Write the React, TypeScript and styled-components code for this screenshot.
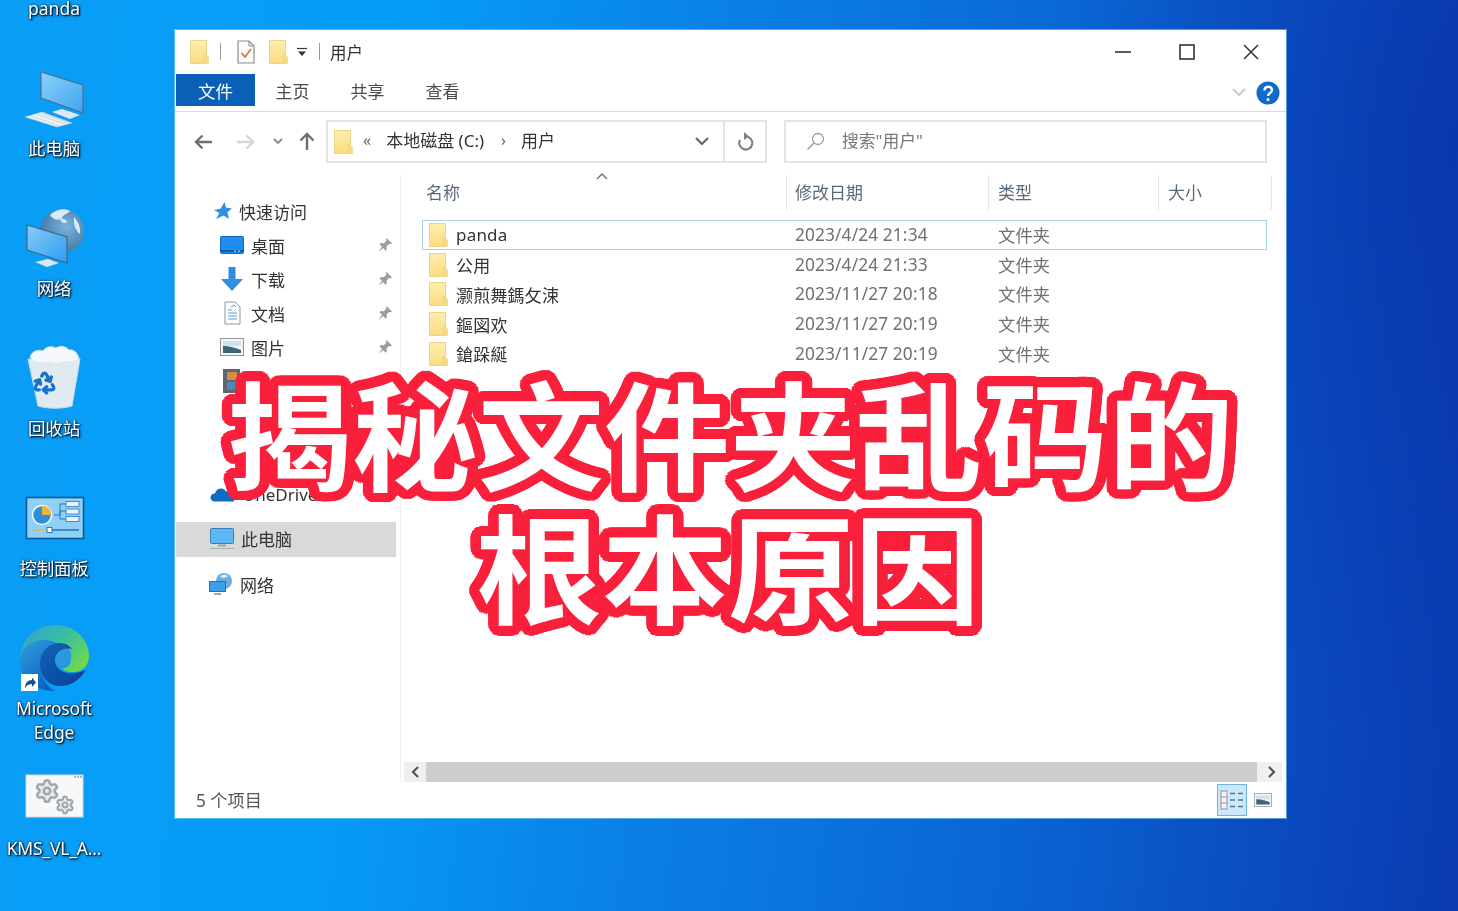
import React from 'react';
import styled, { createGlobalStyle } from 'styled-components';
import { Recycle, Settings } from 'lucide-react';

const FONT = '"Noto Sans", "Noto Sans CJK SC", sans-serif';

// round outline around the headline: rings of hard shadows
const outlineShadow = (color: string) => {
  const parts: string[] = [];
  [10.5, 7, 3.5].forEach(radius => {
    for (let i = 0; i < 36; i++) {
      const angle = (i / 36) * Math.PI * 2;
      parts.push(`${(Math.cos(angle) * radius).toFixed(1)}px ${(Math.sin(angle) * radius).toFixed(1)}px 0 ${color}`);
    }
  });
  return parts.join(', ');
};

const GlobalStyle = createGlobalStyle`
  html, body {
    margin: 0;
    padding: 0;
    overflow: hidden;
  }
  body {
    font-family: ${FONT};
  }
`;

const Desktop = styled.div`
  position: relative;
  display: flex;
  align-items: flex-start;
  width: 1458px;
  height: 911px;
  overflow: hidden;
  background:
    radial-gradient(420px 620px at 100% 15%, rgba(8, 40, 160, 0.45), rgba(8, 40, 160, 0)),
    linear-gradient(97deg, #0a9ef6 0%, #069df6 26%, #0a82e6 45%, #0a66d4 70%, #0a48bc 90%, #0a3ab0 100%);
`;

const IconColumn = styled.div`
  display: flex;
  flex-direction: column;
  flex: none;
  width: 108px;
  margin-right: 67px;
  filter: blur(0.4px);
`;

const TopLabel = styled.div`
  height: 21px;
  margin-top: -4px;
  padding-bottom: 4px;
  text-align: center;
  color: #fff;
  font-size: 17.5px;
  line-height: 24px;
  text-shadow: 1px 1px 1px #02243f, 1px 1px 3px #02243f, 0 0 2px #02243f;
`;

const DesktopItem = styled.div`
  display: flex;
  flex-direction: column;
  align-items: center;
  height: 140px;
`;

const DesktopIconBox = styled.div`
  display: flex;
  align-items: flex-end;
  flex: none;
  height: 112px;
  margin-bottom: 3px;
`;

const DesktopLabel = styled.div`
  flex: none;
  text-align: center;
  white-space: pre-line;
  color: #fff;
  font-size: 17.5px;
  line-height: 24px;
  letter-spacing: -0.2px;
  text-shadow: 1px 1px 1px #02243f, 1px 1px 3px #02243f, 0 0 2px #02243f;
`;

const Window = styled.div`
  display: flex;
  flex-direction: column;
  flex: none;
  width: 1111px;
  height: 788px;
  margin-top: 30px;
  background: #fff;
  box-shadow: 0 0 0 1px rgba(140, 215, 255, 0.55);
  color: #333;
  filter: blur(0.4px);
`;

const TitleBar = styled.div`
  display: flex;
  align-items: center;
  flex: none;
  height: 43px;
  padding-left: 15px;
  padding-bottom: 1px;
`;

const QuickSep = styled.span<{ $left: number; $right: number }>`
  width: 1px;
  height: 17px;
  margin: 0 ${p => p.$right}px 0 ${p => p.$left}px;
  background: #9a9a9a;
`;

const QuickSlot = styled.span<{ $right?: number }>`
  display: flex;
  margin-right: ${p => p.$right ?? 0}px;
`;

const WindowTitle = styled.span`
  font-size: 16.5px;
  color: #333;
`;

const WindowControls = styled.div`
  display: flex;
  margin-left: auto;
  margin-right: 3px;
`;

const ControlButton = styled.div`
  display: flex;
  align-items: center;
  justify-content: center;
  width: 64px;
  height: 43px;
`;

const Ribbon = styled.div`
  display: flex;
  align-items: flex-start;
  flex: none;
  height: 37px;
  border-bottom: 1px solid #dadbdc;
`;

const FileTab = styled.div`
  display: flex;
  align-items: center;
  justify-content: center;
  width: 79px;
  height: 32px;
  margin-left: 1px;
  background: #0a60b6;
  color: #fff;
  font-size: 17.5px;
`;

const RibbonTab = styled.div`
  display: flex;
  align-items: center;
  height: 33px;
  padding: 0 20.5px;
  font-size: 17px;
  color: #4a4a4a;
`;

const RibbonEnd = styled.div`
  display: flex;
  align-items: center;
  gap: 10px;
  height: 37px;
  margin-left: auto;
  margin-right: 6px;
`;

const NavBar = styled.div`
  display: flex;
  align-items: flex-start;
  flex: none;
  height: 63px;
  box-sizing: border-box;
  padding: 8px 19px 0 18px;
`;

const NavButtons = styled.div`
  display: flex;
  align-items: center;
  flex: none;
  width: 133px;
  height: 43px;
`;

const NavGlyph = styled.span<{ $left?: number }>`
  display: flex;
  flex: none;
  justify-content: center;
  width: 20px;
  margin-left: ${p => p.$left ?? 0}px;
`;

const AddressBox = styled.div`
  display: flex;
  align-items: center;
  flex: none;
  width: 441px;
  height: 43px;
  box-sizing: border-box;
  border: 2px solid #e3e4e5;
  padding-left: 6px;
  font-size: 17px;
  color: #333;
`;

const Crumb = styled.span<{ $left: number }>`
  margin: 0 0 5px ${p => p.$left}px;
  white-space: nowrap;
`;

const CrumbMark = styled.span<{ $left: number }>`
  margin: 0 0 3px ${p => p.$left}px;
  color: #666;
  font-size: 16px;
`;

const AddressEnd = styled.div`
  display: flex;
  align-items: center;
  height: 100%;
  margin-left: auto;
`;

const RefreshCell = styled.div`
  display: flex;
  align-items: center;
  justify-content: center;
  width: 42px;
  height: 100%;
  box-sizing: border-box;
  margin-left: 14px;
  border-left: 2px solid #e3e4e5;
`;

const SearchBox = styled.div`
  display: flex;
  align-items: center;
  flex: none;
  gap: 17px;
  width: 483px;
  height: 43px;
  margin-left: 17px;
  padding-left: 20px;
  box-sizing: border-box;
  border: 2px solid #e3e4e5;
  color: #777;
  font-size: 16.8px;
`;

const SearchHint = styled.span`
  margin-bottom: 4px;
`;

const Content = styled.div`
  display: flex;
  flex: 1;
  min-height: 0;
`;

const NavPane = styled.div`
  display: flex;
  flex-direction: column;
  flex: none;
  width: 226px;
  box-sizing: border-box;
  padding-top: 20px;
  border-right: 1px solid #f1f1f1;
`;

const NavRow = styled.div<{ $indent: number; $top?: number; $active?: boolean; $height?: number }>`
  position: relative;
  display: flex;
  align-items: center;
  flex: none;
  gap: 7px;
  width: 220px;
  height: ${p => p.$height ?? 34}px;
  margin: ${p => p.$top ?? 0}px 0 0 1px;
  padding: 0 0 2px ${p => p.$indent}px;
  box-sizing: border-box;
  background: ${p => (p.$active ? '#d9d9d9' : 'transparent')};
  font-size: 17px;
  color: #333;
`;

const NavPin = styled.span`
  display: flex;
  margin-left: auto;
  margin-right: 3px;
`;

const FilePane = styled.div`
  display: flex;
  flex-direction: column;
  flex: 1;
  min-width: 0;
`;

const HeaderRow = styled.div`
  display: grid;
  grid-template-columns: 386px 202px 170px 113px;
  flex: none;
  height: 35px;
`;

const HeaderCell = styled.div<{ $pad: number }>`
  position: relative;
  display: flex;
  align-items: center;
  padding: 0 0 3px ${p => p.$pad}px;
  border-right: 1px solid #e5e6e7;
  font-size: 17px;
  color: #5b6a7a;
`;

const SortCaret = styled.svg`
  position: absolute;
  top: -2px;
  left: 195px;
`;

const FileList = styled.div`
  display: flex;
  flex-direction: column;
  margin: 10px 0 0 21px;
  width: 845px;
`;

const FileRow = styled.div<{ $selected?: boolean }>`
  display: grid;
  grid-template-columns: 372px 203px 170px 98px;
  align-items: center;
  height: 29.75px;
  box-sizing: border-box;
  border: 1px solid ${p => (p.$selected ? '#a5d3ee' : 'transparent')};
`;

const FileName = styled.div`
  display: flex;
  align-items: center;
  gap: 8px;
  padding-left: 6px;
  font-size: 17px;
  letter-spacing: 0.2px;
  color: #333;
`;

const FileMeta = styled.div`
  margin-bottom: 1px;
  font-size: 17.3px;
  letter-spacing: 0.13px;
  color: #707070;
  white-space: nowrap;
`;

const ScrollBar = styled.div`
  display: flex;
  align-items: stretch;
  flex: none;
  width: 878px;
  height: 20px;
  margin: auto 0 0 3px;
  background: #f0f0f0;
`;

const ScrollArrow = styled.div<{ $width: number; $nudge?: number }>`
  display: flex;
  align-items: center;
  justify-content: center;
  width: ${p => p.$width}px;
  box-sizing: border-box;
  padding-left: ${p => p.$nudge ?? 0}px;
`;

const ScrollThumb = styled.div`
  flex: 1;
  background: #cdcdcd;
`;

const StatusBar = styled.div`
  display: flex;
  align-items: center;
  flex: none;
  height: 36px;
  padding: 0 13px 0 21px;
  font-size: 17.2px;
  color: #555;
`;

const StatusText = styled.span`
  margin-bottom: 2px;
`;

const ViewButtons = styled.div`
  display: flex;
  align-items: center;
  gap: 6px;
  margin-left: auto;
`;

const ViewButton = styled.div<{ $active?: boolean }>`
  display: flex;
  align-items: center;
  justify-content: center;
  width: ${p => (p.$active ? 30 : 20)}px;
  height: 32px;
  box-sizing: border-box;
  background: ${p => (p.$active ? '#cce8ff' : 'transparent')};
  border: 1px solid ${p => (p.$active ? '#6fb4e0' : 'transparent')};
`;

const HeadlineText = styled.div`
  position: absolute;
  top: 364px;
  left: 0;
  width: 1458px;
  padding-left: 2px;
  box-sizing: border-box;
  text-align: center;
  font-family: "Noto Sans CJK SC", "Noto Sans", sans-serif;
  font-size: 126px;
  font-weight: 700;
  line-height: 141.5px;
  color: #fff;
  text-shadow: ${outlineShadow('#f9203c')};
  transform: scaleY(0.94);
  transform-origin: top;
`;

const HeadlineLine = styled.div<{ $shift?: number }>`
  margin-left: ${p => p.$shift ?? 0}px;
  white-space: nowrap;
`;

const FolderIcon = () => (
  <svg width="19" height="24" viewBox="0 0 19 24">
    <defs>
      <linearGradient id="folderFill" x1="0" y1="0" x2="0" y2="1">
        <stop offset="0" stopColor="#ffeeb0" />
        <stop offset="1" stopColor="#fbdc80" />
      </linearGradient>
    </defs>
    <rect x="0.5" y="0.5" width="16" height="23" fill="url(#folderFill)" stroke="#ecd48a" />
    <path d="M14 23.5V14l4.5 3v6.5z" fill="#f9d97e" stroke="#ecd48a" strokeWidth="0.6" />
  </svg>
);

const ComputerArt = () => (
  <svg width="80" height="80" viewBox="0 0 80 80">
    <defs>
      <linearGradient id="screenFill" x1="0" y1="0" x2="1" y2="1">
        <stop offset="0" stopColor="#8fd0f8" />
        <stop offset="1" stopColor="#3da5f2" />
      </linearGradient>
    </defs>
    <polygon points="27,19 69,32 69,60 27,45" fill="url(#screenFill)" stroke="#4c6f8f" strokeWidth="1.2" />
    <polygon points="52,58 58,59 58,63 52,62" fill="#a8c0d4" />
    <polygon points="38,59 48,56 66,62 56,66" fill="#dfe8ef" />
    <polygon points="11,64 28,59 58,70 43,74" fill="#eef3f6" stroke="#b6c6d3" strokeWidth="0.6" />
    <path d="M17 63l29 10M22 61l29 10M27 60l27 10" stroke="#b9c9d6" strokeWidth="0.7" />
  </svg>
);

const NetworkArt = () => (
  <svg width="80" height="80" viewBox="0 0 80 80">
    <defs>
      <linearGradient id="netScreen" x1="0" y1="0" x2="1" y2="1">
        <stop offset="0" stopColor="#85cdf8" />
        <stop offset="1" stopColor="#2f9cf0" />
      </linearGradient>
      <radialGradient id="globeFill" cx="0.6" cy="0.4" r="0.7">
        <stop offset="0" stopColor="#7db4dc" />
        <stop offset="1" stopColor="#39709f" />
      </radialGradient>
    </defs>
    <circle cx="48" cy="38" r="22" fill="url(#globeFill)" />
    <path d="M36 22c6-6 15-7 20-4-2 3-7 3-8 7-3 3-9 2-12-3zM60 24c4 4 7 11 6 17-3-2-7-8-6-17zM46 26c3-1 6 0 7 3-2 2-6 1-7-3z" fill="#d5ebf8" />
    <polygon points="13,32 53,44 53,70 13,57" fill="url(#netScreen)" stroke="#3f6687" strokeWidth="1.2" />
    <polygon points="21,69 34,66 45,70 33,74" fill="#dbe5ec" />
  </svg>
);

const RecycleArt = () => (
  <svg width="80" height="80" viewBox="0 0 80 80">
    <path d="M14 26h52l-8 47c-10 3-24 3-34 0z" fill="#dfeaf1" stroke="#c4d9e6" />
    <path d="M16 24c3-8 10-7 13-6 3-5 9-5 13-3 4-3 10-2 13 2 5-1 9 3 10 9-8 4-14 2-18 4-6 2-12-2-17 0-5 1-11-1-14-6z" fill="#f6f9fb" stroke="#d6e2ea" strokeWidth="0.7" />
    <Recycle x={18} y={37} width={25} height={25} color="#1773c9" strokeWidth={3.2} />
  </svg>
);

const ControlPanelArt = () => (
  <svg width="80" height="80" viewBox="0 0 80 80">
    <rect x="12.5" y="24.5" width="57" height="41" fill="#8fd0f7" stroke="#0d5a96" strokeWidth="1.6" />
    <circle cx="28" cy="42" r="9.5" fill="#2f8fdc" stroke="#fff" strokeWidth="1.4" />
    <path d="M28 32.5a9.5 9.5 0 0 1 9.5 9.5H28z" fill="#f2b13c" />
    <path d="M40 42h6V31h6M46 38h6M46 38v8h6" fill="none" stroke="#2a78b8" strokeWidth="1" />
    <rect x="52" y="28.5" width="13" height="5" fill="#e8f4fb" stroke="#2a78b8" strokeWidth="0.8" />
    <rect x="52" y="36" width="13" height="5" fill="#e8f4fb" stroke="#2a78b8" strokeWidth="0.8" />
    <rect x="52" y="43.5" width="13" height="5" fill="#e8f4fb" stroke="#2a78b8" strokeWidth="0.8" />
    <path d="M19 57h17" stroke="#e3b84d" strokeWidth="1.6" />
    <path d="M36 57h29" stroke="#2a78b8" strokeWidth="1.6" />
    <rect x="33" y="54.5" width="5" height="5" fill="#fff" stroke="#2a78b8" />
  </svg>
);

const EdgeArt = () => (
  <svg width="80" height="80" viewBox="0 0 80 80">
    <defs>
      <linearGradient id="edgeTop" x1="0" y1="0" x2="1" y2="0.7">
        <stop offset="0" stopColor="#2f9fd8" />
        <stop offset="0.55" stopColor="#38bfa2" />
        <stop offset="1" stopColor="#6fd84e" />
      </linearGradient>
      <linearGradient id="edgeLeft" x1="0" y1="0" x2="0.6" y2="1">
        <stop offset="0" stopColor="#2f9fe0" />
        <stop offset="1" stopColor="#0c62c0" />
      </linearGradient>
      <linearGradient id="edgeHook" x1="0" y1="0" x2="1" y2="1">
        <stop offset="0" stopColor="#1163b6" />
        <stop offset="1" stopColor="#0a3f96" />
      </linearGradient>
    </defs>
    <path d="M6 47C6 26 22 12 41 12c21 0 34 15 34 31 0 10-7 16-16 16-7 0-10-2-11-4 6 0 9-4 9-9 0-9-11-16-23-16C20 30 9 36 6 47z" fill="url(#edgeTop)" />
    <path d="M6 47c0-12 12-20 24-20 6 0 11 2 14 4-10 0-18 9-18 20 0 12 6 22 15 27C20 78 6 66 6 47z" fill="url(#edgeLeft)" />
    <path d="M38 33c8-4 17-2 19 8 1 6-3 12-9 14-7-3-14-14-10-22z" fill="#2b97df" />
    <path d="M26 51c0-12 9-21 19-21 6 0 10 2 13 6-9-2-17 3-17 11 0 9 9 14 18 13 5 0 9-2 13-3-7 11-16 16-25 16C35 73 26 65 26 51z" fill="url(#edgeHook)" />
    <rect x="7" y="61" width="17" height="17" fill="#fff" />
    <path d="M11 75c0-5 3-8 7-8v-2.500l4 5-4 4.500v-3c-3 0-5 1-7 4z" fill="#1b4f8f" />
  </svg>
);

const KmsArt = () => (
  <svg width="80" height="80" viewBox="0 0 80 80">
    <rect x="12" y="22" width="57" height="42" fill="#f7f8f9" stroke="#d5d9dc" />
    <path d="M60 24h2M63 24h2M66 24h2" stroke="#9aa3a9" strokeWidth="1.4" />
    <Settings x={20} y={25} width={26} height={26} color="#a3a8ab" strokeWidth={2.4} fill="#e9eaeb" />
    <Settings x={41} y={42} width={20} height={20} color="#a3a8ab" strokeWidth={2.6} fill="#e9eaeb" />
  </svg>
);

const CheckPageIcon = () => (
  <svg width="18" height="24" viewBox="0 0 18 24">
    <path d="M1 1h11l5 5v17H1z" fill="#fbfbfb" stroke="#8b8b8b" strokeWidth="1.2" />
    <path d="M12 1v5h5" fill="none" stroke="#8b8b8b" />
    <path d="M4.500 13l3.500 4 6-8" fill="none" stroke="#de6a3c" strokeWidth="1.6" />
  </svg>
);

const DesktopSmallIcon = () => (
  <svg width="24" height="18" viewBox="0 0 24 18">
    <rect x="0.5" y="0.5" width="23" height="17" rx="1" fill="#1f8cf0" stroke="#1169bd" />
    <path d="M1 15h22" stroke="#0a5ca8" strokeWidth="2" />
    <path d="M14 15h2M18 15h2" stroke="#cfe8fb" />
  </svg>
);

const DownloadSmallIcon = () => (
  <svg width="24" height="24" viewBox="0 0 24 24">
    <path d="M8.500 0h7v12H23L12 24 1 12h7.500z" fill="#2f8ee2" />
  </svg>
);

const DocSmallIcon = () => (
  <svg width="24" height="24" viewBox="0 0 24 24">
    <path d="M5 1h10l5 5v17H5z" fill="#fbfcfd" stroke="#8e969c" />
    <path d="M8 9h4M8 12h9M8 15h9M8 18h9" stroke="#5f9fd8" />
    <path d="M11 6l3-2 2 2" stroke="#5f9fd8" fill="none" />
  </svg>
);

const PictureSmallIcon = () => (
  <svg width="24" height="18" viewBox="0 0 24 18">
    <rect x="0.500" y="0.500" width="23" height="17" fill="#f4f6f7" stroke="#8e969c" />
    <path d="M3 3h18v5H3z" fill="#cfe2ee" />
    <path d="M3 8c6 0 10 1 18 4v3H3z" fill="#3e6478" />
  </svg>
);

const VideoSmallIcon = () => (
  <svg width="24" height="24" viewBox="0 0 24 24">
    <rect x="3" y="0" width="17" height="24" fill="#5c6770" />
    <rect x="7" y="3" width="10" height="8" fill="#d98a45" />
    <rect x="7" y="13" width="10" height="8" fill="#4f86b8" />
  </svg>
);

const StarIcon = () => (
  <svg width="18" height="18" viewBox="0 0 18 18">
    <path d="M10.500 0l1.600 5.800L18 6.500l-4.600 3.800L15 17l-5.500-3.600L2 17l3.300-6L0 8l6.500-1.300z" fill="#2f8ee2" />
  </svg>
);

const MonitorSmallIcon = () => (
  <svg width="24" height="22" viewBox="0 0 24 22">
    <rect x="0.500" y="0.500" width="23" height="15" rx="1" fill="#5fb7f5" stroke="#3c7fb5" />
    <path d="M8 17.500h8" stroke="#8fa3b1" strokeWidth="2" />
    <path d="M0 20.500h24" stroke="#a7b3bb" />
  </svg>
);

const NetworkSmallIcon = () => (
  <svg width="24" height="22" viewBox="0 0 24 22">
    <circle cx="15" cy="8" r="8" fill="#6aaee0" />
    <path d="M11 3c3-2 6-2 8 0-2 2-6 3-8 0z" fill="#d8edf9" />
    <rect x="0.500" y="8.500" width="16" height="10" fill="#3f9eea" stroke="#2a6fa8" />
    <path d="M5 21h7" stroke="#7c97aa" strokeWidth="1.600" />
  </svg>
);

const CloudIcon = () => (
  <svg width="26" height="18" viewBox="0 0 26 18">
    <path d="M6 16.500c-6 0-6-8 0-8 1-5 8-7 11-2 5-1 9 3 8 10z" fill="#0f6cc4" />
  </svg>
);

const PinIcon = () => (
  <svg width="16" height="16" viewBox="0 0 16 16">
    <path d="M9.500 1L15 6.500l-1.500.8-1.500-.3-2.500 2.500.3 3-1.300 1.300-2.300-2.800L1.500 15 5 9.700 2.500 7.500 3.800 6l3 .3L9.300 3.800 9 2.300z" fill="#9c9c9c" />
  </svg>
);

const DetailsViewIcon = () => (
  <svg width="24" height="20" viewBox="0 0 24 20">
    <rect x="1" y="1" width="6" height="18" fill="#eef3f6" stroke="#a88ea0" />
    <path d="M1 7h6M1 13h6" stroke="#a88ea0" />
    <path d="M10 3.500h5M18 3.500h5M10 10h5M18 10h5M10 16.500h5M18 16.500h5" stroke="#5d7382" strokeWidth="1.400" />
  </svg>
);

const desktopItems = [
  { label: '此电脑', art: <ComputerArt /> },
  { label: '网络', art: <NetworkArt /> },
  { label: '回收站', art: <RecycleArt /> },
  { label: '控制面板', art: <ControlPanelArt /> },
  { label: 'Microsoft\nEdge', art: <EdgeArt /> },
  { label: 'KMS_VL_A...', art: <KmsArt /> },
];

const pinnedRows = [
  { label: '桌面', icon: <DesktopSmallIcon /> },
  { label: '下载', icon: <DownloadSmallIcon /> },
  { label: '文档', icon: <DocSmallIcon /> },
  { label: '图片', icon: <PictureSmallIcon /> },
];

const files = [
  { name: 'panda', date: '2023/4/24 21:34', selected: true },
  { name: '公用', date: '2023/4/24 21:33' },
  { name: '灏煎舞鎷攵涑', date: '2023/11/27 20:18' },
  { name: '鏂図欢', date: '2023/11/27 20:19' },
  { name: '鎗跺綖', date: '2023/11/27 20:19' },
];

const App: React.FC = () => (
  <Desktop>
    <GlobalStyle />
    <IconColumn>
      <TopLabel>panda</TopLabel>
      {desktopItems.map(item => (
        <DesktopItem key={item.label}>
          <DesktopIconBox>{item.art}</DesktopIconBox>
          <DesktopLabel>{item.label}</DesktopLabel>
        </DesktopItem>
      ))}
    </IconColumn>

    <Window>
      <TitleBar>
        <QuickSlot><FolderIcon /></QuickSlot>
        <QuickSep $left={11} $right={16} />
        <QuickSlot $right={14}><CheckPageIcon /></QuickSlot>
        <QuickSlot $right={9}><FolderIcon /></QuickSlot>
        <svg width="10" height="10" viewBox="0 0 10 10">
          <path d="M0 1.500h10" stroke="#333" strokeWidth="1.200" />
          <path d="M1 4.500h8L5 9z" fill="#333" />
        </svg>
        <QuickSep $left={12} $right={10} />
        <WindowTitle>用户</WindowTitle>
        <WindowControls>
          <ControlButton>
            <svg width="16" height="2" viewBox="0 0 16 2"><path d="M0 1h16" stroke="#333" strokeWidth="1.600" /></svg>
          </ControlButton>
          <ControlButton>
            <svg width="16" height="16" viewBox="0 0 16 16"><rect x="1" y="1" width="14" height="14" fill="none" stroke="#333" strokeWidth="1.600" /></svg>
          </ControlButton>
          <ControlButton>
            <svg width="16" height="16" viewBox="0 0 16 16"><path d="M1 1l14 14M15 1L1 15" stroke="#333" strokeWidth="1.500" /></svg>
          </ControlButton>
        </WindowControls>
      </TitleBar>

      <Ribbon>
        <FileTab>文件</FileTab>
        <RibbonTab>主页</RibbonTab>
        <RibbonTab>共享</RibbonTab>
        <RibbonTab>查看</RibbonTab>
        <RibbonEnd>
          <svg width="14" height="9" viewBox="0 0 14 9"><path d="M1 1l6 6 6-6" fill="none" stroke="#c4c8cc" strokeWidth="1.800" /></svg>
          <svg width="24" height="24" viewBox="0 0 24 24">
            <circle cx="12" cy="12" r="11.500" fill="#0f6cc8" />
            <path d="M8.500 9.500c0-5 7.500-5 7.500-.5 0 3-4 3-4 6" fill="none" stroke="#fff" strokeWidth="2.400" />
            <circle cx="12" cy="18.500" r="1.500" fill="#fff" />
          </svg>
        </RibbonEnd>
      </Ribbon>

      <NavBar>
        <NavButtons>
          <NavGlyph>
            <svg width="19" height="16" viewBox="0 0 19 16"><path d="M18 8H2M8.500 1.500L2 8l6.500 6.500" fill="none" stroke="#6f6f6f" strokeWidth="2.400" /></svg>
          </NavGlyph>
          <NavGlyph $left={22}>
            <svg width="19" height="16" viewBox="0 0 19 16"><path d="M1 8h16M10.500 1.500L17 8l-6.500 6.500" fill="none" stroke="#d6d6d6" strokeWidth="2.400" /></svg>
          </NavGlyph>
          <NavGlyph $left={13}>
            <svg width="10" height="7" viewBox="0 0 10 7"><path d="M1 1l4 4 4-4" fill="none" stroke="#888" strokeWidth="1.800" /></svg>
          </NavGlyph>
          <NavGlyph $left={9}>
            <svg width="16" height="19" viewBox="0 0 16 19"><path d="M8 18V2M1.500 8.500L8 2l6.500 6.500" fill="none" stroke="#6f6f6f" strokeWidth="2.400" /></svg>
          </NavGlyph>
        </NavButtons>
        <AddressBox>
          <FolderIcon />
          <CrumbMark $left={10}>«</CrumbMark>
          <Crumb $left={15}>本地磁盘 (C:)</Crumb>
          <CrumbMark $left={17}>›</CrumbMark>
          <Crumb $left={15}>用户</Crumb>
          <AddressEnd>
            <svg width="14" height="9" viewBox="0 0 14 9"><path d="M1 1l6 6 6-6" fill="none" stroke="#666" strokeWidth="2.200" /></svg>
            <RefreshCell>
              <svg width="18" height="20" viewBox="0 0 18 20">
                <path d="M10 4.500a6.500 6.500 0 1 1-6 3.500" fill="none" stroke="#808080" strokeWidth="2.200" />
                <path d="M8 0l5 4.500L8 8z" fill="#808080" />
              </svg>
            </RefreshCell>
          </AddressEnd>
        </AddressBox>
        <SearchBox>
          <svg width="19" height="19" viewBox="0 0 19 19">
            <circle cx="12" cy="7" r="5.500" fill="none" stroke="#9a9a9a" strokeWidth="1.300" />
            <path d="M8 11L1.500 17.500" stroke="#9a9a9a" strokeWidth="1.500" />
          </svg>
          <SearchHint>搜索"用户"</SearchHint>
        </SearchBox>
      </NavBar>

      <Content>
        <NavPane>
          <NavRow $indent={38}>
            <StarIcon />
            <span>快速访问</span>
          </NavRow>
          {pinnedRows.map(row => (
            <NavRow key={row.label} $indent={44}>
              {row.icon}
              <span>{row.label}</span>
              <NavPin><PinIcon /></NavPin>
            </NavRow>
          ))}
          <NavRow $indent={44}>
            <VideoSmallIcon />
          </NavRow>
          <NavRow $indent={33} $top={79}>
            <CloudIcon />
            <span>OneDrive</span>
          </NavRow>
          <NavRow $indent={34} $top={10} $height={35} $active>
            <MonitorSmallIcon />
            <span>此电脑</span>
          </NavRow>
          <NavRow $indent={33} $top={11}>
            <NetworkSmallIcon />
            <span>网络</span>
          </NavRow>
        </NavPane>

        <FilePane>
          <HeaderRow>
            <HeaderCell $pad={25}>
              名称
              <SortCaret width="12" height="7" viewBox="0 0 12 7">
                <path d="M1 6l5-5 5 5" fill="none" stroke="#777" strokeWidth="1.500" />
              </SortCaret>
            </HeaderCell>
            <HeaderCell $pad={8}>修改日期</HeaderCell>
            <HeaderCell $pad={9}>类型</HeaderCell>
            <HeaderCell $pad={9}>大小</HeaderCell>
          </HeaderRow>
          <FileList>
            {files.map(file => (
              <FileRow key={file.name} $selected={file.selected}>
                <FileName>
                  <FolderIcon />
                  <span>{file.name}</span>
                </FileName>
                <FileMeta>{file.date}</FileMeta>
                <FileMeta>文件夹</FileMeta>
                <span />
              </FileRow>
            ))}
          </FileList>
          <ScrollBar>
            <ScrollArrow $width={22}>
              <svg width="8" height="12" viewBox="0 0 8 12"><path d="M7 1L2 6l5 5" fill="none" stroke="#555" strokeWidth="2.200" /></svg>
            </ScrollArrow>
            <ScrollThumb />
            <ScrollArrow $width={25} $nudge={5}>
              <svg width="8" height="12" viewBox="0 0 8 12"><path d="M1 1l5 5-5 5" fill="none" stroke="#555" strokeWidth="2.200" /></svg>
            </ScrollArrow>
          </ScrollBar>
        </FilePane>
      </Content>

      <StatusBar>
        <StatusText>5 个项目</StatusText>
        <ViewButtons>
          <ViewButton $active><DetailsViewIcon /></ViewButton>
          <ViewButton><PictureSmallIcon /></ViewButton>
        </ViewButtons>
      </StatusBar>
    </Window>

    <HeadlineText>
      <HeadlineLine>揭秘文件夹乱码的</HeadlineLine>
      <HeadlineLine $shift={-4}>根本原因</HeadlineLine>
    </HeadlineText>
  </Desktop>
);

export default App;
